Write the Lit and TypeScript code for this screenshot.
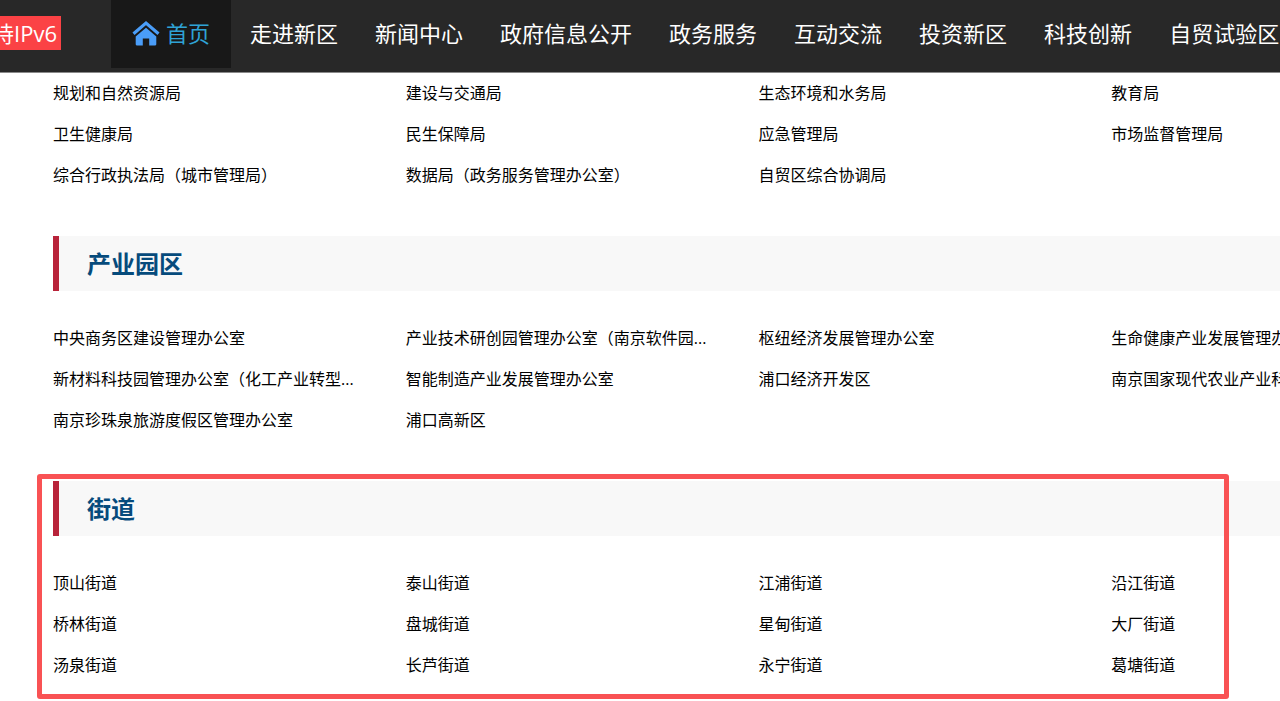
import { LitElement, html, css, nothing } from "lit";
import { customElement, property } from "lit/decorators.js";

interface Section {
  title?: string;
  marked?: boolean;
  items: string[];
}

const NAV = ["走进新区", "新闻中心", "政府信息公开", "政务服务", "互动交流", "投资新区", "科技创新", "自贸试验区"];

const SECTIONS: Section[] = [
  {
    items: [
      "规划和自然资源局", "建设与交通局", "生态环境和水务局", "教育局",
      "卫生健康局", "民生保障局", "应急管理局", "市场监督管理局",
      "综合行政执法局（城市管理局）", "数据局（政务服务管理办公室）", "自贸区综合协调局",
    ],
  },
  {
    title: "产业园区",
    items: [
      "中央商务区建设管理办公室", "产业技术研创园管理办公室（南京软件园...", "枢纽经济发展管理办公室", "生命健康产业发展管理办公室",
      "新材料科技园管理办公室（化工产业转型...", "智能制造产业发展管理办公室", "浦口经济开发区", "南京国家现代农业产业科技创...",
      "南京珍珠泉旅游度假区管理办公室", "浦口高新区",
    ],
  },
  {
    title: "街道",
    marked: true,
    items: [
      "顶山街道", "泰山街道", "江浦街道", "沿江街道",
      "桥林街道", "盘城街道", "星甸街道", "大厂街道",
      "汤泉街道", "长芦街道", "永宁街道", "葛塘街道",
    ],
  },
];

@customElement("site-header")
class SiteHeader extends LitElement {
  static styles = css`
    :host { display: block; }
    .bar {
      display: flex;
      align-items: flex-start;
      height: 72px;
      background: #282828;
      border-bottom: 1px solid #8a8a8a;
      box-sizing: content-box;
      overflow: hidden;
      white-space: nowrap;
      font-size: 22px;
      line-height: 34px;
    }
    .brand {
      flex: none;
      display: flex;
      justify-content: flex-end;
      width: 61px;
      margin: 16px 50px 0 0;
    }
    .badge { background: #fb4245; color: #fff; padding: 0 4px; }
    .nav { display: flex; flex: none; }
    .link {
      box-sizing: border-box;
      height: 68px;
      padding: 16px 18px 18px 19px;
      color: #fff;
      text-decoration: none;
    }
    .home {
      display: flex;
      align-items: center;
      gap: 6px;
      padding: 16px 21px 18px;
      background: #181818;
      color: #2fa3d6;
    }
    .icon { display: block; width: 28px; height: 26px; }
  `;

  render() {
    return html`
      <header class="bar">
        <div class="brand"><span class="badge">支持IPv6</span></div>
        <nav class="nav">
          <a class="link home" href="#">
            <svg class="icon" viewBox="0 0 28 26" aria-hidden="true">
              <path d="M1.500 13.700 14 3.100 26.500 13.700" fill="none" stroke="#4a9df8" stroke-width="3.200" />
              <path d="M14 7.800 24.300 16.400V24.200Q24.300 25.600 22.900 25.600H17.200V18.600H10.800V25.600H5.100Q3.700 25.600 3.700 24.200V16.400Z" fill="#4a9df8" />
            </svg>
            <span>首页</span>
          </a>
          ${NAV.map((n) => html`<a class="link" href="#">${n}</a>`)}
        </nav>
      </header>
    `;
  }
}

@customElement("dept-section")
class DeptSection extends LitElement {
  @property({ attribute: false }) data: Section = { items: [] };

  static styles = css`
    :host { display: block; }
    .section { position: relative; margin-bottom: 40px; }
    .title {
      margin: 0 0 27px;
      padding-left: 28px;
      border-left: 6px solid #b8233a;
      background: #f8f8f8;
      color: #064b7c;
      font-size: 24px;
      font-weight: 700;
      line-height: 55px;
    }
    .list {
      display: grid;
      grid-template-columns: repeat(4, 1fr);
      width: 115%;
      margin: 0;
      padding: 0;
      list-style: none;
    }
    .item {
      font-size: 16px;
      line-height: 41px;
      white-space: nowrap;
    }
    .link { color: #000; text-decoration: none; }
    .mark {
      position: absolute;
      inset: -7px 51px -13px -16px;
      border: 5px solid #f95254;
      border-radius: 3px;
      pointer-events: none;
    }
  `;

  render() {
    const { title, items, marked } = this.data;
    return html`
      <section class="section">
        ${title ? html`<h2 class="title">${title}</h2>` : nothing}
        <ul class="list">
          ${items.map((i) => html`<li class="item"><a class="link" href="#">${i}</a></li>`)}
        </ul>
        ${marked ? html`<div class="mark"></div>` : nothing}
      </section>
    `;
  }
}

@customElement("app-root")
class AppRoot extends LitElement {
  static styles = css`
    :host {
      display: block;
      height: 100vh;
      overflow: hidden;
      background: #fff;
      font-family: "Open Sans", "Noto Sans CJK SC", sans-serif;
    }
    .content { padding-left: 53px; }
  `;

  render() {
    return html`
      <site-header></site-header>
      <main class="content">
        ${SECTIONS.map((s) => html`<dept-section .data=${s}></dept-section>`)}
      </main>
    `;
  }
}
